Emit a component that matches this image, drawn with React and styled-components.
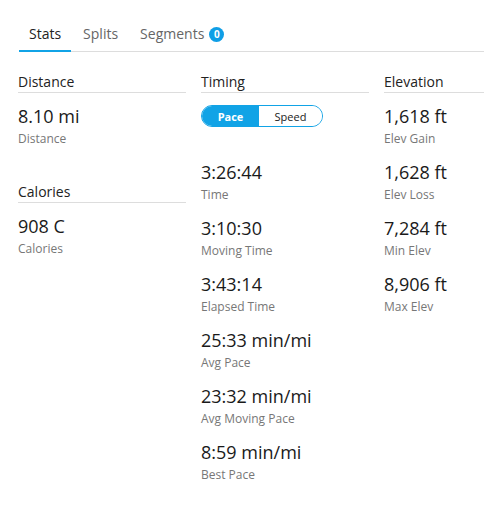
import React, { useState } from "react";
import styled, { createGlobalStyle } from "styled-components";

const GlobalStyle = createGlobalStyle`
  body {
    margin: 0;
    background: #ffffff;
    font-family: "Open Sans", "Noto Sans", sans-serif;
    color: #222222;
    overflow: hidden;
  }
`;

const Page = styled.div`
  width: 484px;
  padding-top: 24px;
`;

const TabBar = styled.div`
  display: flex;
  margin-left: 19px;
  border-bottom: 1px solid #dddddd;
`;

const Tab = styled.div`
  display: flex;
  align-items: center;
  padding: 0 10px 6px;
  margin-right: 2px;
  margin-bottom: -1px;
  font-size: 14px;
  line-height: 20px;
  color: ${(props) => (props.$active ? "#222222" : "#666666")};
  border-bottom: 2px solid ${(props) => (props.$active ? "#11a3e6" : "transparent")};
  cursor: pointer;
`;

const Badge = styled.span`
  display: inline-flex;
  align-items: center;
  justify-content: center;
  width: 15px;
  height: 15px;
  margin-left: 5px;
  border-radius: 50%;
  background: #0f9ee6;
  color: #ffffff;
  font-size: 10px;
  font-weight: 700;
  line-height: 1;
`;

const StatsGrid = styled.div`
  display: grid;
  grid-template-columns: 168px 168px 1fr;
  column-gap: 15px;
  padding-left: 18px;
  margin-top: 20px;
`;

const Column = styled.div`
  display: flex;
  flex-direction: column;
  min-width: 0;
`;

const Section = styled.div`
  display: flex;
  flex-direction: column;
  margin-bottom: 22px;
`;

const SectionTitle = styled.div`
  font-size: 14px;
  line-height: 20px;
  color: #222222;
  border-bottom: 1px solid #dddddd;
  margin-bottom: 11px;
`;

const Item = styled.div`
  display: flex;
  flex-direction: column;
  height: 56px;
`;

const Value = styled.div`
  font-size: 18px;
  line-height: 24px;
  color: #1a1a1a;
`;

const Label = styled.div`
  margin-top: 3px;
  font-size: 12px;
  line-height: 16px;
  color: #777777;
`;

const ToggleSlot = styled.div`
  display: flex;
  align-items: flex-start;
  height: 56px;
  padding-top: 1px;
  box-sizing: border-box;
`;

const Toggle = styled.div`
  display: flex;
  height: 22px;
  border: 1px solid #11a3e6;
  border-radius: 12px;
  overflow: hidden;
  box-sizing: border-box;
`;

const ToggleOption = styled.button`
  border: none;
  margin: 0;
  padding: 0;
  width: ${(props) => props.$width}px;
  font-family: inherit;
  font-size: 11px;
  font-weight: ${(props) => (props.$active ? 700 : 400)};
  background: ${(props) => (props.$active ? "#11a3e6" : "#ffffff")};
  color: ${(props) => (props.$active ? "#ffffff" : "#222222")};
  cursor: pointer;
`;

const Stat = ({ value, label }) => (
  <Item>
    <Value>{value}</Value>
    <Label>{label}</Label>
  </Item>
);

const timing = [
  ["3:26:44", "Time"],
  ["3:10:30", "Moving Time"],
  ["3:43:14", "Elapsed Time"],
  ["25:33 min/mi", "Avg Pace"],
  ["23:32 min/mi", "Avg Moving Pace"],
  ["8:59 min/mi", "Best Pace"],
];

const elevation = [
  ["1,618 ft", "Elev Gain"],
  ["1,628 ft", "Elev Loss"],
  ["7,284 ft", "Min Elev"],
  ["8,906 ft", "Max Elev"],
];

const App = () => {
  const [mode, setMode] = useState("pace");

  return (
    <Page>
      <GlobalStyle />
      <TabBar>
        <Tab $active>Stats</Tab>
        <Tab>Splits</Tab>
        <Tab>
          Segments<Badge>0</Badge>
        </Tab>
      </TabBar>

      <StatsGrid>
        <Column>
          <Section>
            <SectionTitle>Distance</SectionTitle>
            <Stat value="8.10 mi" label="Distance" />
          </Section>
          <Section>
            <SectionTitle>Calories</SectionTitle>
            <Stat value="908 C" label="Calories" />
          </Section>
        </Column>

        <Column>
          <Section>
            <SectionTitle>Timing</SectionTitle>
            <ToggleSlot>
              <Toggle>
                <ToggleOption
                  $width={57}
                  $active={mode === "pace"}
                  onClick={() => setMode("pace")}
                >
                  Pace
                </ToggleOption>
                <ToggleOption
                  $width={63}
                  $active={mode === "speed"}
                  onClick={() => setMode("speed")}
                >
                  Speed
                </ToggleOption>
              </Toggle>
            </ToggleSlot>
            {timing.map(([v, l]) => (
              <Stat key={l} value={v} label={l} />
            ))}
          </Section>
        </Column>

        <Column>
          <Section>
            <SectionTitle>Elevation</SectionTitle>
            {elevation.map(([v, l]) => (
              <Stat key={l} value={v} label={l} />
            ))}
          </Section>
        </Column>
      </StatsGrid>
    </Page>
  );
};

export default App;
